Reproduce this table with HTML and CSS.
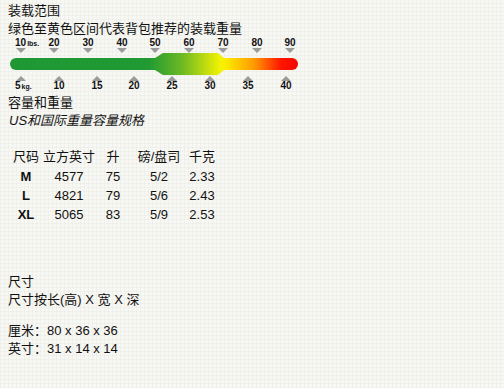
FILE: index.html
```html
<!DOCTYPE html>
<html lang="zh">
<head>
<meta charset="utf-8">
<link rel="stylesheet" href="styles.css">
</head>
<body>
<div class="line">装载范围</div>
<div class="line">绿色至黄色区间代表背包推荐的装载重量</div>
<svg class="scale" width="300" height="57" viewBox="0 0 300 57" xmlns="http://www.w3.org/2000/svg">
  <defs>
    <linearGradient id="g" gradientUnits="userSpaceOnUse" x1="0" y1="0" x2="300" y2="0">
      <stop offset="0" stop-color="#1f9834"/>
      <stop offset="0.47" stop-color="#229a33"/>
      <stop offset="0.58" stop-color="#6cb922"/>
      <stop offset="0.66" stop-color="#c2dc10"/>
      <stop offset="0.71" stop-color="#f4f400"/>
      <stop offset="0.73" stop-color="#fde800"/>
      <stop offset="0.82" stop-color="#ff9a00"/>
      <stop offset="0.91" stop-color="#ff1500"/>
      <stop offset="1" stop-color="#f00000"/>
    </linearGradient>
  </defs>
  <g class="tri">
    <polygon points="8,11 18,11 13,16"/>
    <polygon points="41,11 51,11 46,16"/>
    <polygon points="75,11 85,11 80,16"/>
    <polygon points="109,11 119,11 114,16"/>
    <polygon points="142,11 152,11 147,16"/>
    <polygon points="176,11 186,11 181,16"/>
    <polygon points="210,11 220,11 215,16"/>
    <polygon points="244,11 254,11 249,16"/>
    <polygon points="277,11 287,11 282,16"/>
    <polygon points="8,44 18,44 13,39"/>
    <polygon points="46,44 56,44 51,39"/>
    <polygon points="84,44 94,44 89,39"/>
    <polygon points="121,44 131,44 126,39"/>
    <polygon points="159,44 169,44 164,39"/>
    <polygon points="197,44 207,44 202,39"/>
    <polygon points="235,44 245,44 240,39"/>
    <polygon points="273,44 283,44 278,39"/>
  </g>
  <rect x="2" y="21" width="288" height="12" rx="6" fill="url(#g)"/>
  <polygon points="147,21 155,16 210,16 216,21 216,33 210,38 155,38 147,33" fill="url(#g)"/>
  <g class="lbl">
    <text x="7" y="9">10<tspan class="unit" dx="1">lbs.</tspan></text>
    <text x="46" y="9" text-anchor="middle">20</text>
    <text x="80" y="9" text-anchor="middle">30</text>
    <text x="114" y="9" text-anchor="middle">40</text>
    <text x="147" y="9" text-anchor="middle">50</text>
    <text x="181" y="9" text-anchor="middle">60</text>
    <text x="215" y="9" text-anchor="middle">70</text>
    <text x="249" y="9" text-anchor="middle">80</text>
    <text x="282" y="9" text-anchor="middle">90</text>
    <text x="7" y="52">5<tspan class="unit" dx="1">kg.</tspan></text>
    <text x="51" y="52" text-anchor="middle">10</text>
    <text x="89" y="52" text-anchor="middle">15</text>
    <text x="126" y="52" text-anchor="middle">20</text>
    <text x="164" y="52" text-anchor="middle">25</text>
    <text x="202" y="52" text-anchor="middle">30</text>
    <text x="240" y="52" text-anchor="middle">35</text>
    <text x="278" y="52" text-anchor="middle">40</text>
  </g>
</svg>
<div class="line">容量和重量</div>
<div class="line italic">US和国际重量容量规格</div>

<div class="specs">
  <div class="hd">尺码</div><div class="hd">立方英寸</div><div class="hd">升</div><div class="hd">磅/盘司</div><div class="hd">千克</div>
  <div class="size">M</div><div>4577</div><div>75</div><div>5/2</div><div>2.33</div>
  <div class="size">L</div><div>4821</div><div>79</div><div>5/6</div><div>2.43</div>
  <div class="size">XL</div><div>5065</div><div>83</div><div>5/9</div><div>2.53</div>
</div>

<div class="dims">
  <div class="line">尺寸</div>
  <div class="line">尺寸按长(高) X 宽 X 深</div>
</div>
<div class="measure">
  <div class="line">厘米：80 x 36 x 36</div>
  <div class="line">英寸：31 x 14 x 14</div>
</div>
</body>
</html>
```

FILE: styles.css
```css
html {
  background-color: #f7f7f3;
  background-image:
    repeating-linear-gradient(90deg, rgba(205,205,195,0.14) 0 1px, transparent 1px 4px),
    repeating-linear-gradient(0deg, rgba(205,205,195,0.14) 0 1px, transparent 1px 4px);
}

body {
  margin: 0;
  padding: 2px 8px;
  font-family: "Liberation Sans", "Noto Sans CJK SC", sans-serif;
  font-size: 13px;
  color: #111;
}

.line {
  line-height: 18px;
  white-space: nowrap;
}

.italic {
  font-style: italic;
  padding-left: 1px;
}

.scale {
  display: block;
  margin: -1px 0 0 0;
}

.tri polygon {
  fill: #9b9b9b;
}

.lbl text {
  font-family: "Liberation Sans", sans-serif;
  font-weight: bold;
  font-size: 10px;
  fill: #111;
}

.lbl .unit {
  font-size: 7px;
}

.specs {
  display: grid;
  grid-template-columns: 32px 54px 34px 58px 28px;
  grid-auto-rows: 19px;
  margin: 18px 0 0 2px;
  text-align: center;
  line-height: 19px;
}

.specs .hd {
  height: 17px;
  line-height: 17px;
}

.specs > div {
  white-space: nowrap;
}

.size {
  font-weight: bold;
}

.dims {
  margin-top: 49px;
}

.measure {
  margin-top: 13px;
}
```
